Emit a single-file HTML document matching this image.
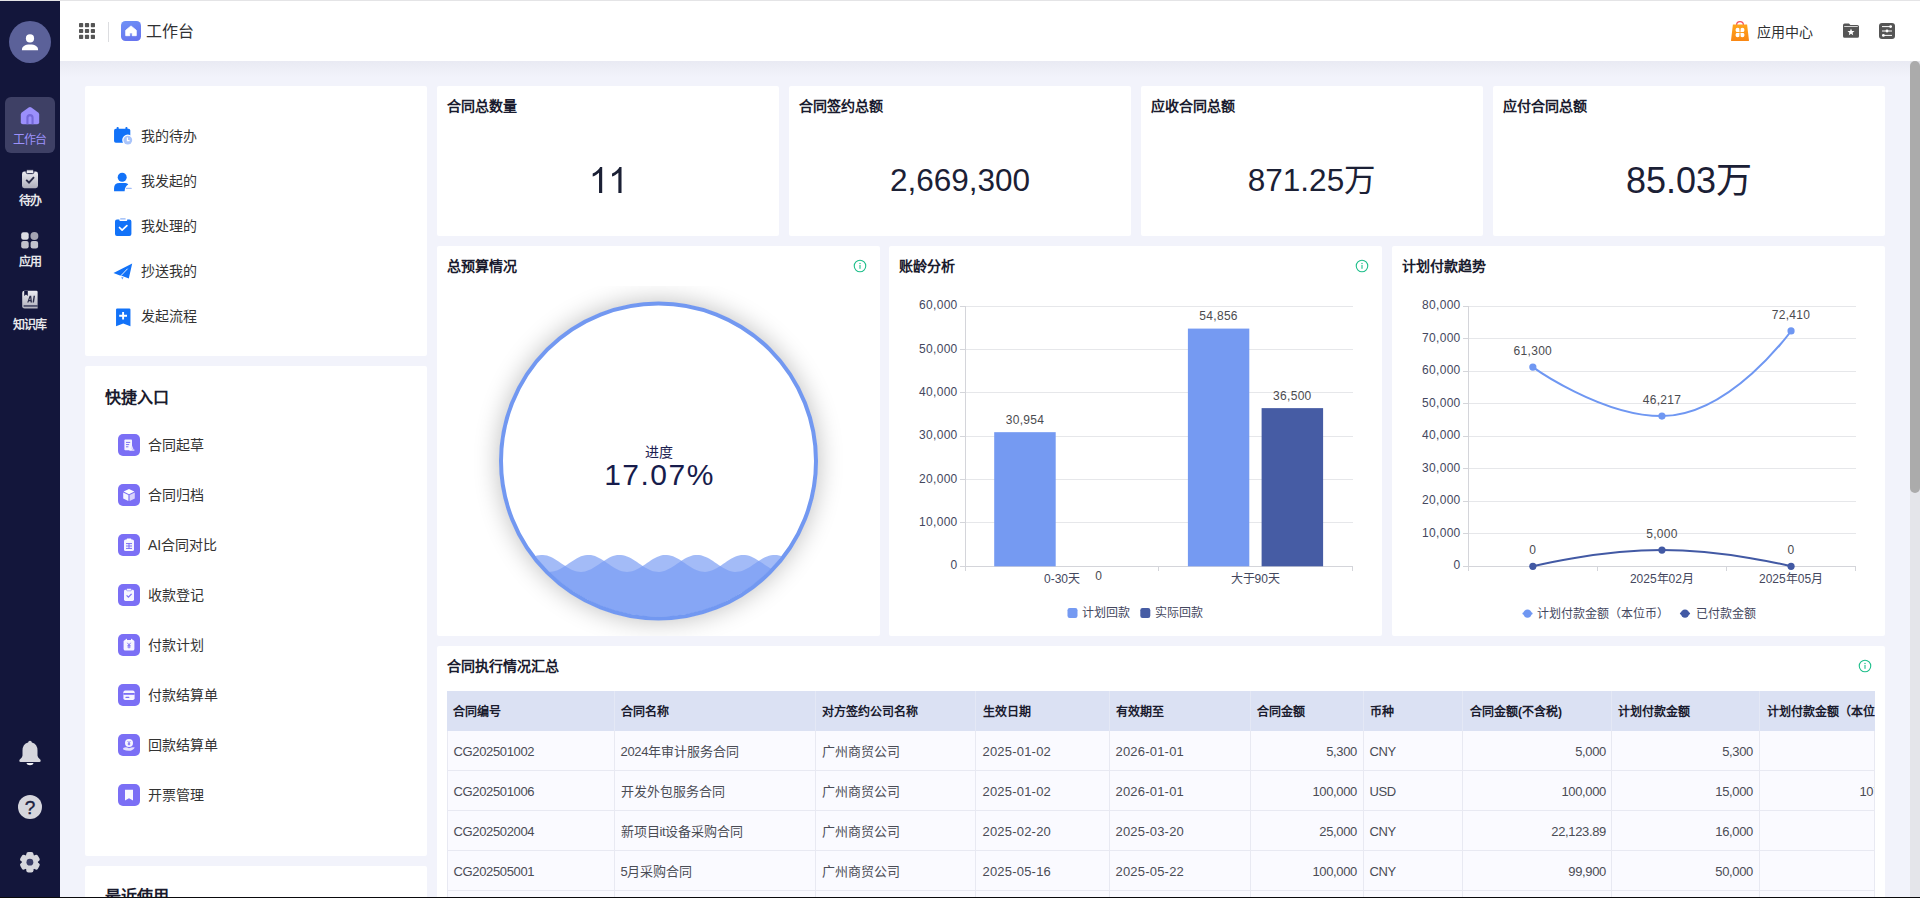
<!DOCTYPE html>
<html lang="zh-CN">
<head>
<meta charset="utf-8">
<title>工作台</title>
<style>
*{box-sizing:border-box;margin:0;padding:0}
html,body{width:1920px;height:898px;overflow:hidden}
body{font-family:"Liberation Sans",sans-serif;background:#f2f3fb;color:#333;position:relative;font-size:14px}
.abs{position:absolute}
#topline{left:0;top:0;width:1920px;height:1px;background:#e4e4e6;z-index:50}
#botline{left:0;top:897px;width:1920px;height:1px;background:#0a0a0c;z-index:50}
#side{left:0;top:1px;width:60px;height:897px;background:#13163b}
#head{left:60px;top:1px;width:1860px;height:60px;background:#fff}
#headshadow{left:60px;top:61px;width:1860px;height:16px;background:linear-gradient(#e9eaf3,#f2f3fb)}
.card{position:absolute;background:#fff;border-radius:2px}
.ct{position:absolute;left:10px;top:11px;font-size:14px;font-weight:bold;color:#1a1b2e;line-height:18px;white-space:nowrap}
.num{position:absolute;left:0;right:0;text-align:center;color:#1b2035;white-space:nowrap}
.li{position:absolute;left:56px;font-size:14px;color:#333;line-height:20px;white-space:nowrap}
.qi{position:absolute;left:63px;font-size:14px;color:#333;line-height:20px;white-space:nowrap}
.qb{position:absolute;left:33px;width:22px;height:22px;border-radius:5px;background:#7b6ff5}
.sl{position:absolute;left:0;width:60px;text-align:center;font-size:12px;line-height:14px;color:#e6e6ea;white-space:nowrap;letter-spacing:-1px;padding-right:1px;font-weight:bold}
.th{position:absolute;top:0;height:40px;line-height:43px;padding:0 0 0 7px;font-size:12px;font-weight:bold;color:#1a1b2e;white-space:nowrap;overflow:hidden}
.td{position:absolute;height:40px;line-height:42px;padding:0 6px 0 6.5px;font-size:13px;color:#4a4c55;white-space:nowrap;overflow:hidden}
.td .n{letter-spacing:-0.35px}
.td .d{letter-spacing:0.2px}
</style>
</head>
<body>
<div id="topline" class="abs"></div>
<div id="side" class="abs">
  <!-- avatar -->
  <div class="abs" style="left:9px;top:20px;width:42px;height:42px;border-radius:50%;background:#5b6199"></div>
  <svg class="abs" style="left:20px;top:31px" width="20" height="20" viewBox="0 0 20 20"><circle cx="10" cy="6.4" r="4.1" fill="#fff"/><path d="M1.9 18.2 C1.9 14.4 4.8 12.6 10 12.6 C15.2 12.6 18.1 14.4 18.1 18.2 Z" fill="#fff"/></svg>
  <!-- active item -->
  <div class="abs" style="left:5px;top:96px;width:50px;height:56px;border-radius:6px;background:#3e4065"></div>
  <svg class="abs" style="left:20px;top:104px" width="20" height="20" viewBox="0 0 20 20"><path d="M8.6 2.4 Q10 1.4 11.4 2.4 L18.2 7.4 Q19.2 8.2 19.2 9.4 V17.2 Q19.2 19.2 17.2 19.2 H2.8 Q0.8 19.2 0.8 17.2 V9.4 Q0.8 8.2 1.8 7.4 Z" fill="#9b8ffb"/><path d="M6.4 19.2 V12.6 A3.6 3.6 0 0 1 13.6 12.6 V19.2 H11.5 V12.8 A1.5 1.5 0 0 0 8.5 12.8 V19.2 Z" fill="#7468d8"/></svg>
  <div class="sl" style="top:132px;color:#9c91fb;font-weight:normal">工作台</div>
  <!-- todo -->
  <svg class="abs" style="left:21px;top:168px" width="18" height="20" viewBox="0 0 18 20"><defs><linearGradient id="gg" x1="0" y1="0" x2="0" y2="1"><stop offset="0" stop-color="#ededf1"/><stop offset="1" stop-color="#aeaebb"/></linearGradient></defs><rect x="1" y="2.6" width="16" height="16.6" rx="2.4" fill="url(#gg)"/><rect x="5.2" y="0.8" width="7.6" height="3.8" rx="1.2" fill="#e9e9ee" stroke="#13163b" stroke-width="0.9"/><path d="M5.2 10.8 L8 13.6 L13 8.2" fill="none" stroke="#2a2c48" stroke-width="1.9"/></svg>
  <div class="sl" style="top:193px">待办</div>
  <!-- apps -->
  <svg class="abs" style="left:21px;top:229.8px" width="18" height="18" viewBox="0 0 18 18"><rect x="0.2" y="1.2" width="7.5" height="7.5" rx="2.2" fill="#dcdce3"/><circle cx="13.4" cy="5" r="3.95" fill="#a3a3b1"/><rect x="0.2" y="9.9" width="7.5" height="7.5" rx="2.2" fill="#c2c2cc"/><rect x="9.6" y="9.9" width="7.5" height="7.5" rx="2.2" fill="#c2c2cc"/></svg>
  <div class="sl" style="top:254px">应用</div>
  <!-- knowledge -->
  <svg class="abs" style="left:21px;top:289.3px" width="18" height="20" viewBox="0 0 18 20"><path d="M3.4 0.8 H15.4 Q16.6 0.8 16.6 2 V18.6 H3.6 Q1.2 18.6 1.2 16.2 V3 Q1.2 0.8 3.4 0.8 Z" fill="url(#gg)"/><path d="M3.2 1 V6 L5 4.6 L6.8 6 V1 Z" fill="#13163b"/><rect x="2.6" y="15.2" width="14" height="1.5" fill="#13163b" opacity=".75"/><path d="M6.2 12.6 L8.6 5.8 H10.2 L11 12.6 H9.6 L9.5 11.2 H7.9 L7.5 12.6 Z M8.3 9.9 H9.4 L9.2 7.6 Z M12.6 5.8 H14 L13 12.6 H11.6 Z" fill="#2a2c48" fill-rule="evenodd"/></svg>
  <div class="sl" style="top:317px">知识库</div>
  <!-- bell -->
  <svg class="abs" style="left:18px;top:737px" width="24" height="28" viewBox="0 0 24 28"><path d="M12 2.8 Q13.7 2.8 13.9 4.5 Q19.5 6.1 19.5 12.6 V17.4 Q19.5 19.2 21.7 20.9 Q22.7 21.7 22.7 22.7 Q22.7 23.9 21.4 23.9 H2.6 Q1.3 23.9 1.3 22.7 Q1.3 21.7 2.3 20.9 Q4.5 19.2 4.5 17.4 V12.6 Q4.5 6.1 10.1 4.5 Q10.3 2.8 12 2.8 Z" fill="#d6d6dd"/><path d="M8.4 24.9 H15.6 Q15 27.2 12 27.2 Q9 27.2 8.4 24.9 Z" fill="#f0f0f4"/></svg>
  <!-- help -->
  <div class="abs" style="left:17.8px;top:794px;width:24.4px;height:24.4px;border-radius:50%;background:#d6d6dd"></div>
  <div class="abs" style="left:18px;top:794px;width:24px;height:24px;text-align:center;font-size:19px;line-height:26px;color:#1b1d40;-webkit-text-stroke:.35px #1b1d40">?</div>
  <!-- gear -->
  <svg class="abs" style="left:19px;top:849.6px" width="22" height="22" viewBox="0 0 22 22"><g transform="translate(10.9 11.2)" fill="#d6d6dd"><circle r="8"/><g id="tt"><rect x="-3.6" y="-10.2" width="7.2" height="6" rx="2.2"/></g><use href="#tt" transform="rotate(60)"/><use href="#tt" transform="rotate(120)"/><use href="#tt" transform="rotate(180)"/><use href="#tt" transform="rotate(240)"/><use href="#tt" transform="rotate(300)"/><circle r="3.4" fill="#393c66"/></g></svg>
</div>
<div id="head" class="abs">
  <!-- grid icon (page x 79,y 23) -->
  <svg class="abs" style="left:19px;top:22px" width="16" height="16" viewBox="0 0 16 16" fill="#555"><rect x="0" y="0" width="4.2" height="4.2" rx=".8"/><rect x="5.9" y="0" width="4.2" height="4.2" rx=".8"/><rect x="11.8" y="0" width="4.2" height="4.2" rx=".8"/><rect x="0" y="5.9" width="4.2" height="4.2" rx=".8"/><rect x="5.9" y="5.9" width="4.2" height="4.2" rx=".8"/><rect x="11.8" y="5.9" width="4.2" height="4.2" rx=".8"/><rect x="0" y="11.8" width="4.2" height="4.2" rx=".8"/><rect x="5.9" y="11.8" width="4.2" height="4.2" rx=".8"/><rect x="11.8" y="11.8" width="4.2" height="4.2" rx=".8"/></svg>
  <div class="abs" style="left:48px;top:21px;width:1px;height:20px;background:#dcdde0"></div>
  <!-- home badge (page x 121,y 21) -->
  <div class="abs" style="left:61px;top:20px;width:20px;height:20px;border-radius:4.5px;background:linear-gradient(160deg,#6f92f6,#6671ee)"></div>
  <svg class="abs" style="left:61px;top:20px" width="20" height="20" viewBox="0 0 20 20"><path d="M10 4.9 L15.3 9.3 V14.7 H11.2 V11.9 H8.8 V14.7 H4.7 V9.3 Z" fill="#fff" stroke="#fff" stroke-width=".8" stroke-linejoin="round"/></svg>
  <div class="abs" style="left:86px;top:19px;font-size:16px;line-height:24px;color:#303133;white-space:nowrap">工作台</div>
  <!-- bag (page x 1731,y 21) -->
  <svg class="abs" style="left:1670px;top:19px" width="20" height="22" viewBox="0 0 20 22"><defs><linearGradient id="bg1" x1="0" y1="0" x2="0" y2="1"><stop offset="0" stop-color="#ffa51d"/><stop offset="1" stop-color="#f98713"/></linearGradient></defs><path d="M6.6 6 V5 A3.4 3.4 0 0 1 13.4 5 V6" fill="none" stroke="#f4515c" stroke-width="1.3"/><path d="M2.9 4.6 H17.1 L19 20.6 Q19.1 21 18.6 21 H1.4 Q0.9 21 1 20.6 Z" fill="url(#bg1)"/><g fill="#fff"><circle cx="7.7" cy="10" r="2.2"/><circle cx="12.3" cy="10" r="2.2"/><circle cx="7.7" cy="15" r="2.2"/><circle cx="12.3" cy="15" r="2.2"/><rect x="8.4" y="10.6" width="3.2" height="3.8"/></g><rect x="9.55" y="7.6" width=".9" height="9.8" fill="#fb9a19"/><rect x="5.4" y="12.05" width="9.2" height=".9" fill="#fb9a19"/></svg>
  <div class="abs" style="left:1697px;top:20px;font-size:14px;line-height:22px;color:#303133;white-space:nowrap">应用中心</div>
  <!-- folder star (page x 1843,y 23) -->
  <svg class="abs" style="left:1783px;top:22px" width="16" height="16" viewBox="0 0 16 16"><path d="M1.6 0.6 H6 L7.4 2 H14.4 Q16 2 16 3.6 V13.2 Q16 14.8 14.4 14.8 H1.6 Q0 14.8 0 13.2 V2.2 Q0 0.6 1.6 0.6 Z" fill="#555"/><rect x="1.2" y="3" width="13.6" height=".9" fill="#fff" opacity=".85"/><path d="M8 5.6 L9 7.9 L11.5 8.1 L9.6 9.7 L10.2 12.2 L8 10.8 L5.8 12.2 L6.4 9.7 L4.5 8.1 L7 7.9 Z" fill="#fff"/></svg>
  <!-- settings (page x 1879,y 23) -->
  <svg class="abs" style="left:1819px;top:22px" width="16" height="16" viewBox="0 0 16 16"><rect x="0" y="0" width="16" height="16" rx="3" fill="#555"/><g stroke="#fff" stroke-width="1" fill="#fff"><path d="M3 3.6 H13 M3 8 H13 M3 12.4 H13"/><circle cx="11.6" cy="3.6" r="1.4" stroke="none"/><circle cx="8" cy="8" r="1.4" stroke="none"/><circle cx="4.4" cy="12.4" r="1.4" stroke="none"/></g></svg>
</div>
<div id="headshadow" class="abs"></div>

<!-- left panels -->
<div class="card" id="p1" style="left:85px;top:86px;width:342px;height:270px">
  <!-- calendar-clock: page (114,127) -->
  <svg class="abs" style="left:28px;top:40px" width="20" height="20" viewBox="0 0 20 20"><defs><mask id="cm"><rect width="20" height="20" fill="#fff"/><circle cx="14.8" cy="14.1" r="5.6" fill="#000"/></mask></defs><g mask="url(#cm)" fill="#1272f8"><rect x="1.05" y="2.7" width="16.25" height="14" rx="1.8"/><rect x="3.6" y="1" width="2.1" height="3.4" rx=".9"/><rect x="12.4" y="1" width="2.1" height="3.4" rx=".9"/></g><circle cx="14.8" cy="14.1" r="4.4" fill="#a9c4fa"/><path d="M14.4 11.6 V14.6 H16.6" fill="none" stroke="#fff" stroke-width="1.2"/></svg>
  <div class="li" style="top:40px">我的待办</div>
  <!-- person: page (114,173) -->
  <svg class="abs" style="left:28px;top:86px" width="20" height="20" viewBox="0 0 20 20"><circle cx="9.2" cy="5.2" r="4.5" fill="#1272f8"/><path d="M1.05 19.2 V16.2 Q1.05 11 6.6 11 H12.4 Q14.6 11 15.3 12.5 Q12 14 11.6 19.2 Z" fill="#1272f8"/><rect x="12.9" y="15.8" width="5.9" height="1.3" rx=".6" fill="#a3bdf7"/></svg>
  <div class="li" style="top:85px">我发起的</div>
  <!-- clipboard check: page (115,218) -->
  <svg class="abs" style="left:29px;top:131px" width="19" height="20" viewBox="0 0 19 20"><path d="M3 2.6 H5.4 V3.2 Q5.4 4 6.2 4 H12.4 Q13.2 4 13.2 3.2 V2.6 H15.4 Q17.4 2.6 17.4 4.6 V16.9 Q17.4 18.9 15.4 18.9 H3 Q1 18.9 1 16.9 V4.6 Q1 2.6 3 2.6 Z" fill="#1272f8"/><rect x="6.1" y="1.3" width="5.6" height="1.3" rx=".5" fill="#8fb4f8"/><path d="M5.5 10.5 L8.1 13.1 L12.9 8.6" fill="none" stroke="#fff" stroke-width="1.7" stroke-linecap="round" stroke-linejoin="round"/></svg>
  <div class="li" style="top:130px">我处理的</div>
  <!-- plane: page (113.5,263) -->
  <svg class="abs" style="left:28px;top:176px" width="20" height="19" viewBox="0 0 20 19"><path d="M19.2 1.5 L0.5 10.9 L7.6 13.7 L9.3 14.1 L15.8 16.6 Z" fill="#1272f8"/><path d="M7.7 13.9 L14.6 6.7" stroke="#fff" stroke-width=".9"/><path d="M8.3 14.7 L10.6 15.6 L9.1 17.4 Z" fill="#5c9cf9"/></svg>
  <div class="li" style="top:175px">抄送我的</div>
  <!-- bookmark plus: page (116,308) -->
  <svg class="abs" style="left:30px;top:221px" width="17" height="21" viewBox="0 0 17 21"><path d="M2.2 1.5 H14.3 Q15.45 1.5 15.45 2.6 V19.3 L8.25 16.4 L1.05 19.3 V2.6 Q1.05 1.5 2.2 1.5 Z" fill="#1272f8"/><path d="M8.1 4.9 V12.6 M4.2 8.75 H12" stroke="#fff" stroke-width="1.9"/></svg>
  <div class="li" style="top:220px">发起流程</div>
</div>
<div class="card" id="p2" style="left:85px;top:366px;width:342px;height:490px">
  <div class="abs" style="left:20px;top:20px;font-size:16px;font-weight:bold;line-height:24px;color:#1a1b2e;white-space:nowrap">快捷入口</div>
  <div class="qb" style="top:68px"></div><svg class="abs" style="left:33px;top:68px" width="22" height="22" viewBox="0 0 22 22"><rect x="6.4" y="5.6" width="7.6" height="10.6" rx=".8" fill="#fff" opacity=".92"/><path d="M8 8.4 H12.2 M8 10.6 H11.2 M8 12.8 H10.4" stroke="#7b6ff5" stroke-width="1"/><path d="M12.4 15.6 L15.6 15.6 L14 11.4 Z" fill="#e3defd"/><rect x="11.4" y="15.6" width="5" height="1" fill="#fff"/></svg><div class="qi" style="top:69px">合同起草</div>
  <div class="qb" style="top:118px"></div><svg class="abs" style="left:33px;top:118px" width="22" height="22" viewBox="0 0 22 22"><path d="M11 5 L16.4 7.6 L11 10.2 L5.6 7.6 Z" fill="#fff"/><path d="M5.2 8.6 L10.4 11.1 V17 L5.2 14.4 Z" fill="#fff" opacity=".92"/><path d="M16.8 8.6 L11.6 11.1 V17 L16.8 14.4 Z" fill="#d9d3fc"/></svg><div class="qi" style="top:119px">合同归档</div>
  <div class="qb" style="top:168px"></div><svg class="abs" style="left:33px;top:168px" width="22" height="22" viewBox="0 0 22 22"><rect x="6" y="5.6" width="10" height="11.4" rx="1.6" fill="#fff" opacity=".93"/><rect x="8.6" y="4.6" width="4.8" height="2" rx=".8" fill="#fff"/><path d="M8 9.6 H14 M8 12 H14 M8 14.4 H14 M11 9 V15" stroke="#7b6ff5" stroke-width="1"/></svg><div class="qi" style="top:169px">AI合同对比</div>
  <div class="qb" style="top:218px"></div><svg class="abs" style="left:33px;top:218px" width="22" height="22" viewBox="0 0 22 22"><rect x="6" y="5.8" width="10" height="11.2" rx="1.4" fill="#fff" opacity=".93"/><rect x="8.6" y="4.6" width="4.8" height="2.2" rx=".8" fill="#fff" stroke="#7b6ff5" stroke-width=".6"/><path d="M8.6 11.4 L10.4 13.2 L13.6 9.8" fill="none" stroke="#7b6ff5" stroke-width="1.2"/></svg><div class="qi" style="top:219px">收款登记</div>
  <div class="qb" style="top:268px"></div><svg class="abs" style="left:33px;top:268px" width="22" height="22" viewBox="0 0 22 22"><rect x="5.6" y="6" width="10.8" height="10.6" rx="1.6" fill="#fff" opacity=".93"/><rect x="7.6" y="4.8" width="1.4" height="2.6" rx=".6" fill="#fff"/><rect x="13" y="4.8" width="1.4" height="2.6" rx=".6" fill="#fff"/><path d="M9.4 8.8 L11 11 L12.6 8.8 M11 11 V14.4 M9.4 11.6 H12.6 M9.4 13 H12.6" fill="none" stroke="#7b6ff5" stroke-width=".9"/></svg><div class="qi" style="top:269px">付款计划</div>
  <div class="qb" style="top:318px"></div><svg class="abs" style="left:33px;top:318px" width="22" height="22" viewBox="0 0 22 22"><rect x="5.4" y="6.4" width="11.2" height="9.6" rx="1.8" fill="#fff" opacity=".93"/><rect x="5.4" y="9" width="11.2" height="1.8" fill="#7b6ff5"/><rect x="7.4" y="12.8" width="4" height="1.2" rx=".6" fill="#7b6ff5"/></svg><div class="qi" style="top:319px">付款结算单</div>
  <div class="qb" style="top:368px"></div><svg class="abs" style="left:33px;top:368px" width="22" height="22" viewBox="0 0 22 22"><circle cx="11" cy="9" r="4" fill="#fff" opacity=".93"/><path d="M9.6 7 L11 8.8 L12.4 7 M11 8.8 V11.4 M9.8 9.4 H12.2 M9.8 10.4 H12.2" fill="none" stroke="#7b6ff5" stroke-width=".8"/><path d="M5.2 14 Q8 12.4 11 14.2 Q14 13 16.8 13.4 Q14.6 16.8 11 16.8 Q8 16.8 5.2 15.6 Z" fill="#e6e2fd"/></svg><div class="qi" style="top:369px">回款结算单</div>
  <div class="qb" style="top:418px"></div><svg class="abs" style="left:33px;top:418px" width="22" height="22" viewBox="0 0 22 22"><path d="M7 5.8 H15 V16.6 L11 14.2 L7 16.6 Z" fill="#fff" opacity=".95"/></svg><div class="qi" style="top:419px">开票管理</div>
</div>
<div class="card" id="p3" style="left:85px;top:866px;width:342px;height:40px">
  <div class="abs" style="left:20px;top:19px;font-size:16px;font-weight:bold;line-height:24px;color:#1a1b2e;white-space:nowrap">最近使用</div>
</div>

<!-- stat cards -->
<div class="card" id="s1" style="left:437px;top:86px;width:342px;height:150px">
  <div class="ct">合同总数量</div>
  <div class="num" style="top:71px;font-size:36px;line-height:48px;padding-right:3px;color:transparent">11</div>
  <svg class="abs" style="left:0;top:0" width="342" height="150" viewBox="0 0 342 150"><g transform="translate(151.78,106.90) scale(0.017578,-0.017578)" fill="#1b2035"><path id="g1" d="M763 0H583V1147Q518 1085 412.5 1023T223 930V1104Q374 1175 487 1276T647 1472H763Z"/><use href="#g1" x="1100"/></g></svg>
</div>
<div class="card" id="s2" style="left:789px;top:86px;width:342px;height:150px">
  <div class="ct">合同签约总额</div>
  <div class="num" style="top:70px;font-size:31.5px;line-height:48px">2,669,300</div>
</div>
<div class="card" id="s3" style="left:1141px;top:86px;width:342px;height:150px">
  <div class="ct">应收合同总额</div>
  <div class="num" style="top:70px;font-size:31.5px;line-height:48px">871.25万</div>
</div>
<div class="card" id="s4" style="left:1493px;top:86px;width:392px;height:150px">
  <div class="ct">应付合同总额</div>
  <div class="num" style="top:71px;font-size:36px;line-height:48px">85.03万</div>
</div>

<!-- chart cards -->
<div class="card" id="c1" style="left:437px;top:246px;width:443px;height:390px;overflow:hidden">
  <div class="ct">总预算情况</div>
  <svg class="abs" style="left:416px;top:12.6px" width="14" height="14" viewBox="0 0 14 14"><circle cx="7" cy="7" r="5.75" fill="none" stroke="#1fbf8b" stroke-width="1.1"/><rect x="6.45" y="6" width="1.1" height="3.8" fill="#1fbf8b"/><rect x="6.4" y="3.9" width="1.2" height="1.2" fill="#1fbf8b"/></svg>
  <svg class="abs" style="left:0;top:0" width="443" height="390" viewBox="0 0 443 390">
    <defs>
      <clipPath id="lc"><circle cx="221.5" cy="215" r="155.8"/></clipPath>
      <filter id="ls" x="-25%" y="-25%" width="150%" height="150%"><feGaussianBlur stdDeviation="13"/></filter>
      <clipPath id="area"><rect x="0" y="40" width="443" height="350"/></clipPath>
    </defs>
    <g clip-path="url(#area)"><circle cx="221.5" cy="215" r="159.5" fill="#000" opacity=".26" filter="url(#ls)"/></g>
    <circle cx="221.5" cy="215" r="159.0" fill="#fff"/>
    <g clip-path="url(#lc)">
      <path d="M64.0 325.76 L66.0 325.90 L68.0 325.81 L70.0 325.51 L72.0 324.99 L74.0 324.28 L76.0 323.38 L78.0 322.33 L80.0 321.14 L82.0 319.86 L84.0 318.52 L86.0 317.14 L88.0 315.77 L90.0 314.45 L92.0 313.20 L94.0 312.06 L96.0 311.06 L98.0 310.23 L100.0 309.59 L102.0 309.15 L104.0 308.93 L106.0 308.93 L108.0 309.15 L110.0 309.59 L112.0 310.23 L114.0 311.06 L116.0 312.06 L118.0 313.20 L120.0 314.45 L122.0 315.77 L124.0 317.14 L126.0 318.52 L128.0 319.86 L130.0 321.14 L132.0 322.33 L134.0 323.38 L136.0 324.28 L138.0 324.99 L140.0 325.51 L142.0 325.81 L144.0 325.90 L146.0 325.76 L148.0 325.40 L150.0 324.83 L152.0 324.07 L154.0 323.13 L156.0 322.04 L158.0 320.83 L160.0 319.53 L162.0 318.17 L164.0 316.80 L166.0 315.44 L168.0 314.13 L170.0 312.90 L172.0 311.80 L174.0 310.84 L176.0 310.05 L178.0 309.46 L180.0 309.07 L182.0 308.91 L184.0 308.96 L186.0 309.24 L188.0 309.73 L190.0 310.42 L192.0 311.30 L194.0 312.33 L196.0 313.50 L198.0 314.77 L200.0 316.11 L202.0 317.49 L204.0 318.86 L206.0 320.19 L208.0 321.45 L210.0 322.60 L212.0 323.62 L214.0 324.47 L216.0 325.14 L218.0 325.61 L220.0 325.86 L222.0 325.88 L224.0 325.69 L226.0 325.28 L228.0 324.66 L230.0 323.85 L232.0 322.87 L234.0 321.75 L236.0 320.51 L238.0 319.20 L240.0 317.83 L242.0 316.45 L244.0 315.10 L246.0 313.81 L248.0 312.62 L250.0 311.54 L252.0 310.63 L254.0 309.89 L256.0 309.34 L258.0 309.01 L260.0 308.90 L262.0 309.01 L264.0 309.34 L266.0 309.89 L268.0 310.63 L270.0 311.54 L272.0 312.62 L274.0 313.81 L276.0 315.10 L278.0 316.45 L280.0 317.83 L282.0 319.20 L284.0 320.51 L286.0 321.75 L288.0 322.87 L290.0 323.85 L292.0 324.66 L294.0 325.28 L296.0 325.69 L298.0 325.88 L300.0 325.86 L302.0 325.61 L304.0 325.14 L306.0 324.47 L308.0 323.62 L310.0 322.60 L312.0 321.45 L314.0 320.19 L316.0 318.86 L318.0 317.49 L320.0 316.11 L322.0 314.77 L324.0 313.50 L326.0 312.33 L328.0 311.30 L330.0 310.42 L332.0 309.73 L334.0 309.24 L336.0 308.96 L338.0 308.91 L340.0 309.07 L342.0 309.46 L344.0 310.05 L346.0 310.84 L348.0 311.80 L350.0 312.90 L352.0 314.13 L354.0 315.44 L356.0 316.80 L358.0 318.17 L360.0 319.53 L362.0 320.83 L364.0 322.04 L366.0 323.13 L368.0 324.07 L370.0 324.83 L372.0 325.40 L374.0 325.76 L376.0 325.90 L378.0 325.81 L379.0 375.5 L64.0 375.5 Z" fill="#799cf3" opacity=".685"/>
      <path d="M64.0 311.44 L66.0 310.54 L68.0 309.82 L70.0 309.30 L72.0 308.99 L74.0 308.90 L76.0 309.03 L78.0 309.39 L80.0 309.95 L82.0 310.71 L84.0 311.64 L86.0 312.73 L88.0 313.94 L90.0 315.24 L92.0 316.59 L94.0 317.97 L96.0 319.33 L98.0 320.64 L100.0 321.87 L102.0 322.98 L104.0 323.94 L106.0 324.73 L108.0 325.33 L110.0 325.72 L112.0 325.89 L114.0 325.84 L116.0 325.57 L118.0 325.08 L120.0 324.40 L122.0 323.53 L124.0 322.49 L126.0 321.33 L128.0 320.06 L130.0 318.72 L132.0 317.35 L134.0 315.98 L136.0 314.64 L138.0 313.38 L140.0 312.22 L142.0 311.20 L144.0 310.35 L146.0 309.67 L148.0 309.20 L150.0 308.95 L152.0 308.91 L154.0 309.10 L156.0 309.51 L158.0 310.12 L160.0 310.93 L162.0 311.90 L164.0 313.02 L166.0 314.25 L168.0 315.57 L170.0 316.94 L172.0 318.31 L174.0 319.66 L176.0 320.96 L178.0 322.16 L180.0 323.23 L182.0 324.15 L184.0 324.90 L186.0 325.45 L188.0 325.78 L190.0 325.90 L192.0 325.79 L194.0 325.47 L196.0 324.93 L198.0 324.19 L200.0 323.28 L202.0 322.21 L204.0 321.02 L206.0 319.73 L208.0 318.38 L210.0 317.00 L212.0 315.64 L214.0 314.32 L216.0 313.08 L218.0 311.96 L220.0 310.97 L222.0 310.16 L224.0 309.54 L226.0 309.12 L228.0 308.92 L230.0 308.94 L232.0 309.18 L234.0 309.64 L236.0 310.31 L238.0 311.16 L240.0 312.17 L242.0 313.32 L244.0 314.58 L246.0 315.91 L248.0 317.28 L250.0 318.65 L252.0 319.99 L254.0 321.27 L256.0 322.44 L258.0 323.48 L260.0 324.36 L262.0 325.05 L264.0 325.55 L266.0 325.83 L268.0 325.89 L270.0 325.73 L272.0 325.35 L274.0 324.76 L276.0 323.98 L278.0 323.03 L280.0 321.93 L282.0 320.70 L284.0 319.40 L286.0 318.04 L288.0 316.66 L290.0 315.30 L292.0 314.00 L294.0 312.79 L296.0 311.70 L298.0 310.75 L300.0 309.98 L302.0 309.41 L304.0 309.05 L306.0 308.90 L308.0 308.98 L310.0 309.28 L312.0 309.79 L314.0 310.50 L316.0 311.40 L318.0 312.45 L320.0 313.63 L322.0 314.90 L324.0 316.25 L326.0 317.62 L328.0 318.99 L330.0 320.32 L332.0 321.57 L334.0 322.71 L336.0 323.71 L338.0 324.55 L340.0 325.20 L342.0 325.64 L344.0 325.87 L346.0 325.87 L348.0 325.66 L350.0 325.22 L352.0 324.59 L354.0 323.76 L356.0 322.76 L358.0 321.63 L360.0 320.38 L362.0 319.06 L364.0 317.69 L366.0 316.32 L368.0 314.97 L370.0 313.69 L372.0 312.50 L374.0 311.44 L376.0 310.54 L378.0 309.82 L379.0 375.5 L64.0 375.5 Z" fill="#799cf3" opacity=".685"/>
    </g>
    <circle cx="221.5" cy="215" r="157.5" fill="none" stroke="#7298f1" stroke-width="4"/>
  </svg>
  <div class="abs" style="left:0;width:443px;top:196px;text-align:center;font-size:14px;line-height:20px;color:#1b2050">进度</div>
  <div class="abs" style="left:0;width:443px;top:209px;text-align:center;font-size:30px;line-height:40px;letter-spacing:1.5px;color:#171c4c;padding-left:2px">17.07%</div>
</div>
<div class="card" id="c2" style="left:889px;top:246px;width:493px;height:390px">
  <div class="ct">账龄分析</div>
  <svg class="abs" style="left:466px;top:12.6px" width="14" height="14" viewBox="0 0 14 14"><circle cx="7" cy="7" r="5.75" fill="none" stroke="#1fbf8b" stroke-width="1.1"/><rect x="6.45" y="6" width="1.1" height="3.8" fill="#1fbf8b"/><rect x="6.4" y="3.9" width="1.2" height="1.2" fill="#1fbf8b"/></svg>
  <svg class="abs" style="left:0;top:0" width="493" height="390" viewBox="0 0 493 390" font-family="Liberation Sans, sans-serif" font-size="12">
<line x1="76" x2="464" y1="320.5" y2="320.5" stroke="#d4d5da" stroke-width="1"/><line x1="71" x2="76" y1="320.5" y2="320.5" stroke="#d4d5da" stroke-width="1"/><text x="68.60" y="323.40" text-anchor="end" letter-spacing="0.3" fill="#44475e">0</text>
<line x1="76" x2="464" y1="276.5" y2="276.5" stroke="#e6e7ea" stroke-width="1"/><line x1="71" x2="76" y1="276.5" y2="276.5" stroke="#d4d5da" stroke-width="1"/><text x="68.60" y="280.07" text-anchor="end" letter-spacing="0.3" fill="#44475e">10,000</text>
<line x1="76" x2="464" y1="233.5" y2="233.5" stroke="#e6e7ea" stroke-width="1"/><line x1="71" x2="76" y1="233.5" y2="233.5" stroke="#d4d5da" stroke-width="1"/><text x="68.60" y="236.73" text-anchor="end" letter-spacing="0.3" fill="#44475e">20,000</text>
<line x1="76" x2="464" y1="190.5" y2="190.5" stroke="#e6e7ea" stroke-width="1"/><line x1="71" x2="76" y1="190.5" y2="190.5" stroke="#d4d5da" stroke-width="1"/><text x="68.60" y="193.40" text-anchor="end" letter-spacing="0.3" fill="#44475e">30,000</text>
<line x1="76" x2="464" y1="146.5" y2="146.5" stroke="#e6e7ea" stroke-width="1"/><line x1="71" x2="76" y1="146.5" y2="146.5" stroke="#d4d5da" stroke-width="1"/><text x="68.60" y="150.07" text-anchor="end" letter-spacing="0.3" fill="#44475e">40,000</text>
<line x1="76" x2="464" y1="103.5" y2="103.5" stroke="#e6e7ea" stroke-width="1"/><line x1="71" x2="76" y1="103.5" y2="103.5" stroke="#d4d5da" stroke-width="1"/><text x="68.60" y="106.73" text-anchor="end" letter-spacing="0.3" fill="#44475e">50,000</text>
<line x1="76" x2="464" y1="60.5" y2="60.5" stroke="#e6e7ea" stroke-width="1"/><line x1="71" x2="76" y1="60.5" y2="60.5" stroke="#d4d5da" stroke-width="1"/><text x="68.60" y="63.40" text-anchor="end" letter-spacing="0.3" fill="#44475e">60,000</text>
<line x1="76.5" x2="76.5" y1="60" y2="320" stroke="#d4d5da" stroke-width="1"/><line x1="76.5" x2="76.5" y1="320" y2="325" stroke="#d4d5da" stroke-width="1"/><line x1="269.5" x2="269.5" y1="320" y2="325" stroke="#d4d5da" stroke-width="1"/><line x1="463.5" x2="463.5" y1="320" y2="325" stroke="#d4d5da" stroke-width="1"/><rect x="105.2" y="186.17" width="61.5" height="134.13" fill="#759af2"/><text x="135.95" y="177.97" text-anchor="middle" letter-spacing="0.3" fill="#4b4b4f">30,954</text>
<rect x="298.9" y="82.59" width="61.4" height="237.71" fill="#759af2"/><text x="329.6" y="74.39" text-anchor="middle" letter-spacing="0.3" fill="#4b4b4f">54,856</text>
<rect x="372.6" y="162.13" width="61.5" height="158.17" fill="#465ca4"/><text x="403.35" y="153.93" text-anchor="middle" letter-spacing="0.3" fill="#4b4b4f">36,500</text>
<text x="209.8" y="334" text-anchor="middle" letter-spacing="0.3" fill="#4b4b4f">0</text><text x="173" y="336.5" text-anchor="middle" fill="#44475e">0-30天</text><text x="366.3" y="336.5" text-anchor="middle" fill="#44475e">大于90天</text><rect x="178.5" y="362" width="10" height="10" rx="2.2" fill="#759af2"/><text x="193" y="371.4" fill="#44475e">计划回款</text><rect x="251.3" y="362" width="10" height="10" rx="2.2" fill="#465ca4"/><text x="265.8" y="371.4" fill="#44475e">实际回款</text></svg>
</div>
<div class="card" id="c3" style="left:1392px;top:246px;width:493px;height:390px">
  <div class="ct">计划付款趋势</div>
  <svg class="abs" style="left:0;top:0" width="493" height="390" viewBox="0 0 493 390" font-family="Liberation Sans, sans-serif" font-size="12">
<line x1="76" x2="464" y1="320.5" y2="320.5" stroke="#d4d5da" stroke-width="1"/><line x1="71" x2="76" y1="320.5" y2="320.5" stroke="#d4d5da" stroke-width="1"/><text x="68.60" y="323.40" text-anchor="end" letter-spacing="0.3" fill="#44475e">0</text>
<line x1="76" x2="464" y1="287.5" y2="287.5" stroke="#e6e7ea" stroke-width="1"/><line x1="71" x2="76" y1="287.5" y2="287.5" stroke="#d4d5da" stroke-width="1"/><text x="68.60" y="290.90" text-anchor="end" letter-spacing="0.3" fill="#44475e">10,000</text>
<line x1="76" x2="464" y1="255.5" y2="255.5" stroke="#e6e7ea" stroke-width="1"/><line x1="71" x2="76" y1="255.5" y2="255.5" stroke="#d4d5da" stroke-width="1"/><text x="68.60" y="258.40" text-anchor="end" letter-spacing="0.3" fill="#44475e">20,000</text>
<line x1="76" x2="464" y1="222.5" y2="222.5" stroke="#e6e7ea" stroke-width="1"/><line x1="71" x2="76" y1="222.5" y2="222.5" stroke="#d4d5da" stroke-width="1"/><text x="68.60" y="225.90" text-anchor="end" letter-spacing="0.3" fill="#44475e">30,000</text>
<line x1="76" x2="464" y1="190.5" y2="190.5" stroke="#e6e7ea" stroke-width="1"/><line x1="71" x2="76" y1="190.5" y2="190.5" stroke="#d4d5da" stroke-width="1"/><text x="68.60" y="193.40" text-anchor="end" letter-spacing="0.3" fill="#44475e">40,000</text>
<line x1="76" x2="464" y1="157.5" y2="157.5" stroke="#e6e7ea" stroke-width="1"/><line x1="71" x2="76" y1="157.5" y2="157.5" stroke="#d4d5da" stroke-width="1"/><text x="68.60" y="160.90" text-anchor="end" letter-spacing="0.3" fill="#44475e">50,000</text>
<line x1="76" x2="464" y1="125.5" y2="125.5" stroke="#e6e7ea" stroke-width="1"/><line x1="71" x2="76" y1="125.5" y2="125.5" stroke="#d4d5da" stroke-width="1"/><text x="68.60" y="128.40" text-anchor="end" letter-spacing="0.3" fill="#44475e">60,000</text>
<line x1="76" x2="464" y1="92.5" y2="92.5" stroke="#e6e7ea" stroke-width="1"/><line x1="71" x2="76" y1="92.5" y2="92.5" stroke="#d4d5da" stroke-width="1"/><text x="68.60" y="95.90" text-anchor="end" letter-spacing="0.3" fill="#44475e">70,000</text>
<line x1="76" x2="464" y1="60.5" y2="60.5" stroke="#e6e7ea" stroke-width="1"/><line x1="71" x2="76" y1="60.5" y2="60.5" stroke="#d4d5da" stroke-width="1"/><text x="68.60" y="63.40" text-anchor="end" letter-spacing="0.3" fill="#44475e">80,000</text>
<line x1="76.5" x2="76.5" y1="60" y2="320" stroke="#d4d5da" stroke-width="1"/><line x1="76.5" x2="76.5" y1="320" y2="325" stroke="#d4d5da" stroke-width="1"/><line x1="205.5" x2="205.5" y1="320" y2="325" stroke="#d4d5da" stroke-width="1"/><line x1="334.5" x2="334.5" y1="320" y2="325" stroke="#d4d5da" stroke-width="1"/><line x1="463.5" x2="463.5" y1="320" y2="325" stroke="#d4d5da" stroke-width="1"/><path d="M140.85 121.07 C140.85 121.07 209.05 170.09 269.95 170.09 C338.15 170.09 399.05 84.97 399.05 84.97" fill="none" stroke="#6f97f2" stroke-width="2"/><circle cx="140.85" cy="121.07" r="3.6" fill="#6f97f2"/><text x="140.85" y="109.07" text-anchor="middle" letter-spacing="0.3" fill="#4b4b4f">61,300</text>
<circle cx="269.95" cy="170.09" r="3.6" fill="#6f97f2"/><text x="269.95" y="158.09" text-anchor="middle" letter-spacing="0.3" fill="#4b4b4f">46,217</text>
<circle cx="399.05" cy="84.97" r="3.6" fill="#6f97f2"/><text x="399.05" y="72.97" text-anchor="middle" letter-spacing="0.3" fill="#4b4b4f">72,410</text>
<path d="M140.85 320.3 C140.85 320.3 205.4 304.05 269.95 304.05 C334.5 304.05 399.05 320.3 399.05 320.3" fill="none" stroke="#4259a4" stroke-width="2"/><circle cx="140.85" cy="320.3" r="3.6" fill="#4259a4"/><text x="140.85" y="308.3" text-anchor="middle" letter-spacing="0.3" fill="#4b4b4f">0</text>
<circle cx="269.95" cy="304.05" r="3.6" fill="#4259a4"/><text x="269.95" y="292.05" text-anchor="middle" letter-spacing="0.3" fill="#4b4b4f">5,000</text>
<circle cx="399.05" cy="320.3" r="3.6" fill="#4259a4"/><text x="399.05" y="308.3" text-anchor="middle" letter-spacing="0.3" fill="#4b4b4f">0</text>
<text x="269.95" y="337" text-anchor="middle" fill="#44475e">2025年02月</text><text x="399.05" y="337" text-anchor="middle" fill="#44475e">2025年05月</text><rect x="130.4" y="366.6" width="10.2" height="2" rx="1" fill="#6f97f2"/><circle cx="135.5" cy="367.6" r="4.2" fill="#6f97f2"/><text x="145" y="371.6" fill="#44475e">计划付款金额（本位币）</text><rect x="287.9" y="366.6" width="10.2" height="2" rx="1" fill="#4259a4"/><circle cx="293" cy="367.6" r="4.2" fill="#4259a4"/><text x="304" y="371.6" fill="#44475e">已付款金额</text></svg>
</div>

<!-- table card -->
<div class="card" id="t1" style="left:437px;top:646px;width:1448px;height:260px">
  <div class="ct">合同执行情况汇总</div>
  <svg class="abs" style="left:1421px;top:12.6px" width="14" height="14" viewBox="0 0 14 14"><circle cx="7" cy="7" r="5.75" fill="none" stroke="#1fbf8b" stroke-width="1.1"/><rect x="6.45" y="6" width="1.1" height="3.8" fill="#1fbf8b"/><rect x="6.4" y="3.9" width="1.2" height="1.2" fill="#1fbf8b"/></svg>
  <div class="abs" id="tbl" style="left:10px;top:45px;width:1428px;height:215px;overflow:hidden">
<div class="abs" style="left:0;top:0;width:1428px;height:40px;background:#dbe1f3"></div>
<div class="abs" style="left:0;top:40px;width:1428px;height:40px;background:#fafaff;border-bottom:1px solid #e8e9f2"></div>
<div class="abs" style="left:0;top:80px;width:1428px;height:40px;background:#fafaff;border-bottom:1px solid #e8e9f2"></div>
<div class="abs" style="left:0;top:120px;width:1428px;height:40px;background:#fafaff;border-bottom:1px solid #e8e9f2"></div>
<div class="abs" style="left:0;top:160px;width:1428px;height:40px;background:#fafaff;border-bottom:1px solid #e8e9f2"></div>
<div class="abs" style="left:0;top:200px;width:1428px;height:40px;background:#fafaff;border-bottom:1px solid #e8e9f2"></div>
<div class="abs" style="left:0;top:40px;width:1px;height:200px;background:#e8e9f2"></div><div class="abs" style="left:1427px;top:40px;width:1px;height:200px;background:#e8e9f2;z-index:3"></div><div class="abs" style="left:167px;top:0;width:1px;height:40px;background:#e4e8f5"></div><div class="abs" style="left:167px;top:40px;width:1px;height:200px;background:#e8e9f2"></div><div class="abs" style="left:368px;top:0;width:1px;height:40px;background:#e4e8f5"></div><div class="abs" style="left:368px;top:40px;width:1px;height:200px;background:#e8e9f2"></div><div class="abs" style="left:528px;top:0;width:1px;height:40px;background:#e4e8f5"></div><div class="abs" style="left:528px;top:40px;width:1px;height:200px;background:#e8e9f2"></div><div class="abs" style="left:662px;top:0;width:1px;height:40px;background:#e4e8f5"></div><div class="abs" style="left:662px;top:40px;width:1px;height:200px;background:#e8e9f2"></div><div class="abs" style="left:803px;top:0;width:1px;height:40px;background:#e4e8f5"></div><div class="abs" style="left:803px;top:40px;width:1px;height:200px;background:#e8e9f2"></div><div class="abs" style="left:916px;top:0;width:1px;height:40px;background:#e4e8f5"></div><div class="abs" style="left:916px;top:40px;width:1px;height:200px;background:#e8e9f2"></div><div class="abs" style="left:1015px;top:0;width:1px;height:40px;background:#e4e8f5"></div><div class="abs" style="left:1015px;top:40px;width:1px;height:200px;background:#e8e9f2"></div><div class="abs" style="left:1164px;top:0;width:1px;height:40px;background:#e4e8f5"></div><div class="abs" style="left:1164px;top:40px;width:1px;height:200px;background:#e8e9f2"></div><div class="abs" style="left:1312px;top:0;width:1px;height:40px;background:#e4e8f5"></div><div class="abs" style="left:1312px;top:40px;width:1px;height:200px;background:#e8e9f2"></div>
<div class="th" style="left:0px;width:167px;padding-left:6px">合同编号</div><div class="th" style="left:167px;width:201px">合同名称</div><div class="th" style="left:368px;width:161px">对方签约公司名称</div><div class="th" style="left:529px;width:133px">生效日期</div><div class="th" style="left:662px;width:141px">有效期至</div><div class="th" style="left:803px;width:113px">合同金额</div><div class="th" style="left:916px;width:99px">币种</div><div class="th" style="left:1016px;width:149px">合同金额(不含税)</div><div class="th" style="left:1164px;width:148px">计划付款金额</div><div class="th" style="left:1313px;width:152px">计划付款金额（本位币）</div>
<div class="td" style="left:0px;width:167px;top:40px;text-align:left"><span class="n">CG202501002</span></div><div class="td" style="left:167px;width:201px;top:40px;text-align:left"><span class="n">2024</span>年审计服务合同</div><div class="td" style="left:368px;width:161px;top:40px;text-align:left">广州商贸公司</div><div class="td" style="left:529px;width:133px;top:40px;text-align:left"><span class="d">2025-01-02</span></div><div class="td" style="left:662px;width:141px;top:40px;text-align:left"><span class="d">2026-01-01</span></div><div class="td" style="left:803px;width:113px;top:40px;text-align:right"><span class="n">5,300</span></div><div class="td" style="left:916px;width:99px;top:40px;text-align:left"><span class="n">CNY</span></div><div class="td" style="left:1016px;width:149px;top:40px;text-align:right"><span class="n">5,000</span></div><div class="td" style="left:1164px;width:148px;top:40px;text-align:right"><span class="n">5,300</span></div>
<div class="td" style="left:0px;width:167px;top:80px;text-align:left"><span class="n">CG202501006</span></div><div class="td" style="left:167px;width:201px;top:80px;text-align:left">开发外包服务合同</div><div class="td" style="left:368px;width:161px;top:80px;text-align:left">广州商贸公司</div><div class="td" style="left:529px;width:133px;top:80px;text-align:left"><span class="d">2025-01-02</span></div><div class="td" style="left:662px;width:141px;top:80px;text-align:left"><span class="d">2026-01-01</span></div><div class="td" style="left:803px;width:113px;top:80px;text-align:right"><span class="n">100,000</span></div><div class="td" style="left:916px;width:99px;top:80px;text-align:left"><span class="n">USD</span></div><div class="td" style="left:1016px;width:149px;top:80px;text-align:right"><span class="n">100,000</span></div><div class="td" style="left:1164px;width:148px;top:80px;text-align:right"><span class="n">15,000</span></div><div class="td" style="left:1313px;width:150px;top:80px;text-align:right"><span class="n">107,250</span></div>
<div class="td" style="left:0px;width:167px;top:120px;text-align:left"><span class="n">CG202502004</span></div><div class="td" style="left:167px;width:201px;top:120px;text-align:left">新项目<span class="n">it</span>设备采购合同</div><div class="td" style="left:368px;width:161px;top:120px;text-align:left">广州商贸公司</div><div class="td" style="left:529px;width:133px;top:120px;text-align:left"><span class="d">2025-02-20</span></div><div class="td" style="left:662px;width:141px;top:120px;text-align:left"><span class="d">2025-03-20</span></div><div class="td" style="left:803px;width:113px;top:120px;text-align:right"><span class="n">25,000</span></div><div class="td" style="left:916px;width:99px;top:120px;text-align:left"><span class="n">CNY</span></div><div class="td" style="left:1016px;width:149px;top:120px;text-align:right"><span class="n">22,123.89</span></div><div class="td" style="left:1164px;width:148px;top:120px;text-align:right"><span class="n">16,000</span></div>
<div class="td" style="left:0px;width:167px;top:160px;text-align:left"><span class="n">CG202505001</span></div><div class="td" style="left:167px;width:201px;top:160px;text-align:left"><span class="n">5</span>月采购合同</div><div class="td" style="left:368px;width:161px;top:160px;text-align:left">广州商贸公司</div><div class="td" style="left:529px;width:133px;top:160px;text-align:left"><span class="d">2025-05-16</span></div><div class="td" style="left:662px;width:141px;top:160px;text-align:left"><span class="d">2025-05-22</span></div><div class="td" style="left:803px;width:113px;top:160px;text-align:right"><span class="n">100,000</span></div><div class="td" style="left:916px;width:99px;top:160px;text-align:left"><span class="n">CNY</span></div><div class="td" style="left:1016px;width:149px;top:160px;text-align:right"><span class="n">99,900</span></div><div class="td" style="left:1164px;width:148px;top:160px;text-align:right"><span class="n">50,000</span></div>

</div>
</div>

<div class="abs" style="left:1910px;top:61px;width:10px;height:836px;background:#e4e5ea"></div>
<div class="abs" style="left:1910px;top:61px;width:10px;height:432px;border-radius:5px;background:#ababab"></div>
<div id="botline" class="abs"></div>
</body>
</html>
